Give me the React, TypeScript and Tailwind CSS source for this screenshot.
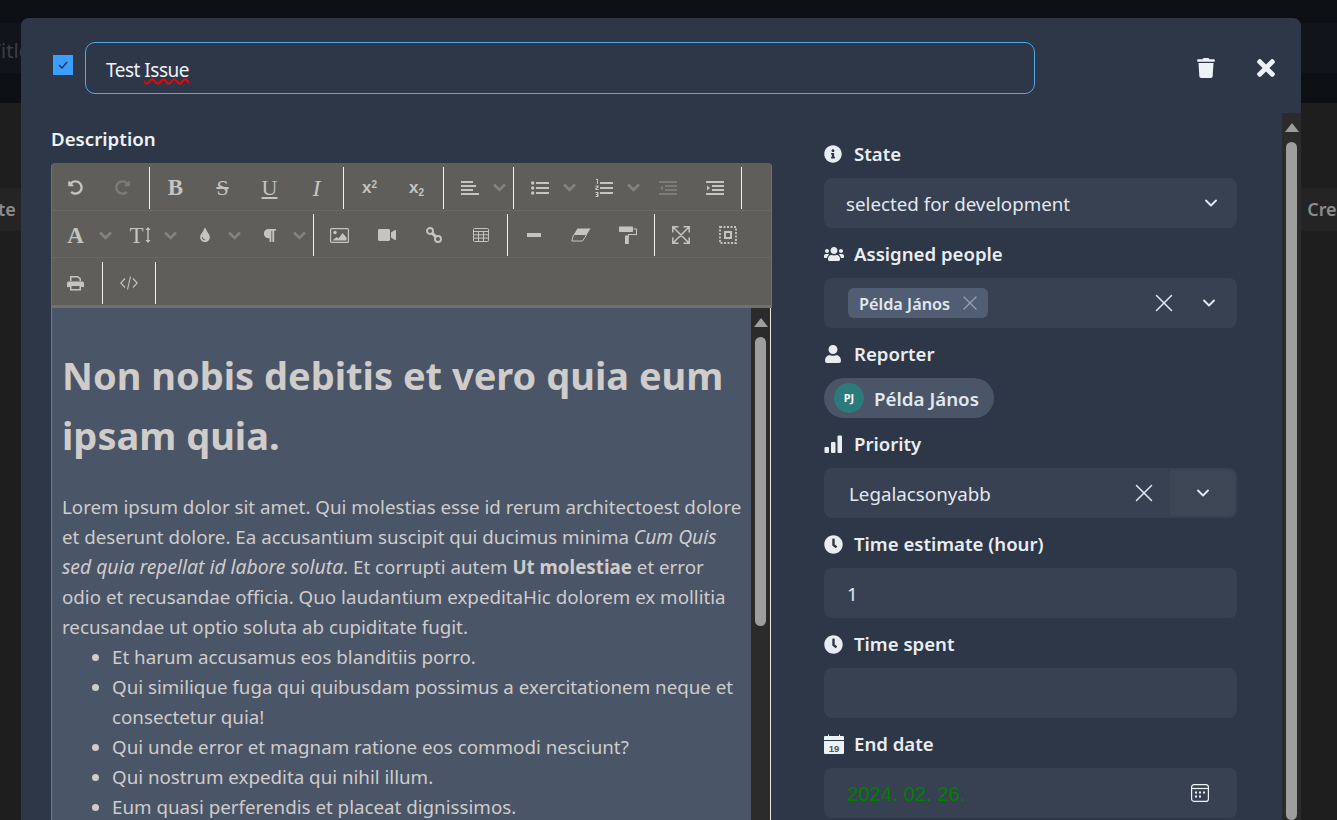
import React from 'react';
import {
  FaClock,
  FaInfoCircle,
  FaParagraph,
  FaRedoAlt,
  FaTimes,
  FaTint,
  FaTrash,
  FaUndoAlt,
  FaUser,
  FaUsers,
  FaVideo,
} from 'react-icons/fa';
import { ChevronDown, X } from 'lucide-react';

const Sep = () => <div className="mr-[2px] ml-[3px] h-[42px] w-px self-center bg-[#f1f1f1]" />;

const Btn: React.FC<{ children: React.ReactNode; dim?: boolean }> = ({ children, dim }) => (
  <div
    className={`flex h-[42px] w-[47px] items-center justify-center ${
      dim ? 'text-[#7c7c7a]' : 'text-[#c4c4c2]'
    }`}
  >
    {children}
  </div>
);

const Caret: React.FC<{ wide?: boolean }> = ({ wide }) => (
  <div className={`flex items-center ${wide ? 'w-[17.500px]' : 'w-[17px]'}`}>
    <svg width="13" height="9" viewBox="0 0 13 9" fill="none" stroke="#838381" strokeWidth="2.600">
      <path d="M1 1.500l5.500 5.500 5.500-5.500" />
    </svg>
  </div>
);

const Glyph: React.FC<{ className: string; children: React.ReactNode }> = ({
  className,
  children,
}) => <span className={`font-['Liberation_Serif',serif] leading-none ${className}`}>{children}</span>;

const Lines = ({ indent }: { indent: 'in' | 'out' }) => (
  <svg width="18" height="14" viewBox="0 0 18 14" fill="currentColor">
    <rect x="0" y="0" width="18" height="2" />
    <rect x="6" y="4" width="12" height="2" />
    <rect x="6" y="8" width="12" height="2" />
    <rect x="0" y="12" width="18" height="2" />
    {indent === 'in' ? <path d="M1 4.500 4 7 1 9.500z" /> : <path d="M4 4.500 1 7 4 9.500z" />}
  </svg>
);

const AlignIcon = () => (
  <svg width="18" height="14" viewBox="0 0 18 14" fill="currentColor">
    <rect x="0" y="0" width="12" height="2" />
    <rect x="0" y="4" width="15" height="2" />
    <rect x="0" y="8" width="12" height="2" />
    <rect x="0" y="12" width="18" height="2" />
  </svg>
);

const UlIcon = () => (
  <svg width="18" height="14" viewBox="0 0 18 14" fill="currentColor">
    <circle cx="1.700" cy="2" r="1.700" />
    <circle cx="1.700" cy="7" r="1.700" />
    <circle cx="1.700" cy="12" r="1.700" />
    <rect x="5" y="1" width="13" height="2" />
    <rect x="5" y="6" width="13" height="2" />
    <rect x="5" y="11" width="13" height="2" />
  </svg>
);

const OlIcon = () => (
  <svg width="18" height="18" viewBox="0 0 18 18" fill="currentColor">
    <rect x="5" y="3" width="13" height="2" />
    <rect x="5" y="8" width="13" height="2" />
    <rect x="5" y="13" width="13" height="2" />
    <path d="M1 0h2v5H2V1H1zM0.500 6.500h3v2.500H2v1h1.500v1h-3V8.500H2v-1H0.500zM0.500 13h3v5h-3v-1H2v-1H1v-1h1v-1H0.500z" />
  </svg>
);

const ImageIcon = () => (
  <svg width="19" height="15" viewBox="0 0 19 15" fill="currentColor">
    <rect x="0.600" y="0.600" width="17.800" height="13.800" rx="1" fill="none" stroke="currentColor" strokeWidth="1.200" />
    <circle cx="5" cy="4.500" r="1.700" />
    <path d="M2.500 12.500 6.500 9l2 1.500L12.500 5l4 4.500v3z" />
  </svg>
);

const LinkIcon = () => (
  <svg width="16" height="16" viewBox="0 0 16 16" fill="none" stroke="currentColor" strokeWidth="1.900">
    <circle cx="4" cy="4" r="3" />
    <circle cx="12" cy="12" r="3" />
    <path d="M6 6l4 4" strokeWidth="3" />
  </svg>
);

const TableIcon = () => (
  <svg width="16" height="14" viewBox="0 0 16 14" fill="none" stroke="currentColor" strokeWidth="1">
    <rect x="0.500" y="0.500" width="15" height="13" rx="1" />
    <path d="M0.500 3.500h15M0.500 6.800h15M0.500 10.100h15M5.500 3.500v10M10.500 3.500v10" />
  </svg>
);

const ClearIcon = () => (
  <svg width="20" height="14" viewBox="0 0 20 14" fill="currentColor">
    <path d="M6.500 0.500H19.500L15.500 7H2.500z" />
    <path d="M2.500 7 0.800 13h10.700l4-6" fill="none" stroke="currentColor" strokeWidth="1" />
  </svg>
);

const RollerIcon = () => (
  <svg width="18" height="18" viewBox="0 0 18 18" fill="currentColor">
    <rect x="0" y="0.500" width="14" height="5.500" rx="0.800" />
    <path d="M14.500 3H17.500v5.500H9.500V11" fill="none" stroke="currentColor" strokeWidth="1.100" />
    <rect x="6" y="9.500" width="3.800" height="8.500" />
  </svg>
);

const ExpandIcon = () => (
  <svg width="18" height="18" viewBox="0 0 18 18" fill="none" stroke="currentColor" strokeWidth="1.500">
    <path d="M0.800 6.500V0.800h5.700M11.500 0.800h5.700v5.700M17.200 11.500v5.700h-5.700M6.500 17.200H0.800v-5.700M1.500 1.500l15 15M16.500 1.500l-15 15" />
  </svg>
);

const SelectAllIcon = () => (
  <svg width="18" height="18" viewBox="0 0 18 18" fill="currentColor">
    <path d="M5 5h8v8H5zm2 2v4h4V7z" fillRule="evenodd" />
    <path d="M1 1h16v16H1z" fill="none" stroke="currentColor" strokeWidth="1.800" strokeDasharray="2 1.500" />
  </svg>
);

const PrintIcon = () => (
  <svg width="17" height="16" viewBox="0 0 17 16" fill="currentColor">
    <path d="M3 6V1h8l3 2.500V6h-1.500V4.200L10.500 2.500h-6V6z" />
    <path d="M1.500 6.500h14A1.500 1.500 0 0 1 17 8v4h-3v3.500H3V12H0V8a1.500 1.500 0 0 1 1.500-1.500zM4.500 11v3h8v-3z" fillRule="evenodd" />
  </svg>
);

const CodeIcon = () => (
  <svg width="18" height="14" viewBox="0 0 18 14" fill="none" stroke="currentColor" strokeWidth="1.100">
    <path d="M5 2.500.8 7 5 11.500M13 2.500 17.200 7 13 11.500M10.500 0.500 7.500 13.500" />
  </svg>
);

const TextSizeIcon = () => (
  <span className="flex items-center">
    <Glyph className="text-[23px]">T</Glyph>
    <svg width="6" height="16" viewBox="0 0 6 16" fill="currentColor" className="ml-px">
      <path d="M3 0 5.500 3H3.700v10h1.800L3 16 .5 13h1.800V3H.5z" />
    </svg>
  </span>
);

const Toolbar = () => (
  <div className="rounded-t-[3px] border-x border-b-[3px] border-[#70706e] bg-[#5f5e5b]">
    <div className="flex h-[48px] items-center border-b border-[#686765] pt-[2px]">
      <Btn>
        <FaUndoAlt size={15} />
      </Btn>
      <Btn dim>
        <FaRedoAlt size={15} />
      </Btn>
      <Sep />
      <Btn>
        <Glyph className="text-[23px] font-bold">B</Glyph>
      </Btn>
      <Btn>
        <Glyph className="text-[22px] line-through">S</Glyph>
      </Btn>
      <Btn>
        <Glyph className="text-[22px] underline underline-offset-2">U</Glyph>
      </Btn>
      <Btn>
        <Glyph className="text-[24px] italic">I</Glyph>
      </Btn>
      <Sep />
      <Btn>
        <span className="font-['Liberation_Sans',sans-serif] text-[17px] leading-none font-bold">
          x<sup className="text-[10px]">2</sup>
        </span>
      </Btn>
      <Btn>
        <span className="font-['Liberation_Sans',sans-serif] text-[17px] leading-none font-bold">
          x<sub className="text-[10px]">2</sub>
        </span>
      </Btn>
      <Sep />
      <Btn>
        <AlignIcon />
      </Btn>
      <Caret />
      <Sep />
      <Btn>
        <UlIcon />
      </Btn>
      <Caret />
      <Btn>
        <OlIcon />
      </Btn>
      <Caret />
      <Btn dim>
        <Lines indent="out" />
      </Btn>
      <Btn>
        <Lines indent="in" />
      </Btn>
      <Sep />
    </div>
    <div className="flex h-[47px] items-center border-b border-[#686765] pt-[2px]">
      <Btn>
        <Glyph className="text-[23px] font-bold">A</Glyph>
      </Btn>
      <Caret wide />
      <Btn>
        <TextSizeIcon />
      </Btn>
      <Caret wide />
      <Btn>
        <FaTint size={14} />
      </Btn>
      <Caret wide />
      <Btn>
        <FaParagraph size={15} />
      </Btn>
      <Caret wide />
      <Sep />
      <Btn>
        <ImageIcon />
      </Btn>
      <Btn>
        <FaVideo size={18} />
      </Btn>
      <Btn>
        <LinkIcon />
      </Btn>
      <Btn>
        <TableIcon />
      </Btn>
      <Sep />
      <Btn>
        <div className="h-[4px] w-[14px] bg-[#c4c4c2]" />
      </Btn>
      <Btn>
        <ClearIcon />
      </Btn>
      <Btn>
        <RollerIcon />
      </Btn>
      <Sep />
      <Btn>
        <ExpandIcon />
      </Btn>
      <Btn>
        <SelectAllIcon />
      </Btn>
    </div>
    <div className="flex h-[47px] items-center pt-[2px]">
      <Btn>
        <PrintIcon />
      </Btn>
      <Sep />
      <Btn>
        <CodeIcon />
      </Btn>
      <Sep />
    </div>
  </div>
);

const Scrollbar: React.FC<{ className: string; thumb: string }> = ({ className, thumb }) => (
  <div className={`flex shrink-0 flex-col items-center bg-[#2b2b2b] ${className}`}>
    <div className="mt-[10px] h-0 w-0 border-x-[7px] border-b-[9px] border-x-transparent border-b-[#9e9e9e]" />
    <div className={`mt-[10px] w-[11px] rounded-full bg-[#9e9e9e] ${thumb}`} />
  </div>
);

const Editor = () => (
  <div className="w-[721px] overflow-hidden rounded-t-[4px]">
    <Toolbar />
    <div className="mr-px flex h-[600px] border-r border-l border-r-[#e8e8e8] border-l-[#75797f] bg-[#4a5568]">
      <div className="min-w-0 flex-1 pr-[7px] pl-[10px] text-[18.750px] leading-[30px] text-[#cfccca]">
        <h1 className="mt-[37px] mb-[27px] text-[38px] leading-[60px] font-bold">
          Non nobis debitis et vero quia eum ipsam quia.
        </h1>
        <p>
          Lorem ipsum dolor sit amet. Qui molestias esse id rerum architectoest dolore et deserunt
          dolore. Ea accusantium suscipit qui ducimus minima{' '}
          <em className="text-[19.300px]">Cum Quis sed quia repellat id labore soluta</em>. Et
          corrupti autem <strong>Ut molestiae</strong> et error odio et recusandae officia. Quo
          laudantium expeditaHic dolorem ex mollitia recusandae ut optio soluta ab cupiditate fugit.
        </p>
        <ul className="list-disc pl-[50px]">
          <li>Et harum accusamus eos blanditiis porro.</li>
          <li>Qui similique fuga qui quibusdam possimus a exercitationem neque et consectetur quia!</li>
          <li>Qui unde error et magnam ratione eos commodi nesciunt?</li>
          <li>Qui nostrum expedita qui nihil illum.</li>
          <li>Eum quasi perferendis et placeat dignissimos.</li>
        </ul>
      </div>
      <Scrollbar className="w-[19px]" thumb="h-[289px]" />
    </div>
  </div>
);

const SignalIcon = () => (
  <svg width="18" height="18" viewBox="0 0 18 18" fill="currentColor">
    <rect x="0.500" y="12" width="4.500" height="6" rx="1" />
    <rect x="7" y="7" width="4.500" height="11" rx="1" />
    <rect x="13.500" y="0.500" width="4.500" height="17.500" rx="1" />
  </svg>
);

const CalendarIcon = () => (
  <svg width="20" height="20" viewBox="0 0 20 20">
    <path
      d="M1 2h3V0.500h1V2h10V0.500h1V2h3a1 1 0 0 1 1 1v3H0V3a1 1 0 0 1 1-1zM0 7h20v12a1 1 0 0 1-1 1H1a1 1 0 0 1-1-1z"
      fill="#edf2f7"
    />
    <text x="10" y="17.500" textAnchor="middle" fontSize="9.500" fill="#4a5568" fontFamily="Liberation Sans, sans-serif">
      19
    </text>
  </svg>
);

const Label: React.FC<{ icon: React.ReactNode; children: React.ReactNode }> = ({
  icon,
  children,
}) => (
  <div className="flex h-[50px] items-center pt-[2px] text-[18.600px] font-semibold text-[#e9edf2]">
    <span className="flex w-[30px] items-center">{icon}</span>
    {children}
  </div>
);

const Field: React.FC<{ children?: React.ReactNode; className?: string }> = ({
  children,
  className = '',
}) => (
  <div
    className={`flex h-[50px] items-center rounded-[8px] bg-[#374151] text-[18.750px] text-[#e2e8f0] ${className}`}
  >
    {children}
  </div>
);

const SidePanel = () => (
  <div className="w-[413px]">
    <Label icon={<FaInfoCircle size={18} />}>State</Label>
    <Field className="justify-between pr-[16px] pl-[22px]">
      <span className="pt-[2px]">selected for development</span>
      <ChevronDown size={20} strokeWidth={2.300} />
    </Field>
    <Label icon={<FaUsers size={20} />}>Assigned people</Label>
    <Field className="pl-[24px]">
      <div className="flex h-[30px] items-center gap-[12px] rounded-[6px] bg-[#515d72] pr-[10px] pl-[11px] text-[16.300px] font-semibold text-[#e2e8f0]">
        <span className="pt-[2px]">Példa János</span>
        <X strokeWidth={1.300} className="-mx-[4px] h-[24px] w-[24px] text-[#94a0b2]" />
      </div>
      <X size={30} strokeWidth={1.200} className="mr-[20px] ml-auto" />
      <ChevronDown size={20} strokeWidth={2.300} className="mr-[18px]" />
    </Field>
    <Label icon={<FaUser size={18} />}>Reporter</Label>
    <div className="flex h-[40px] w-[170px] items-center rounded-full bg-[#4a5568] pl-[10px] text-[18.750px] font-semibold text-[#e2e8f0]">
      <span className="mr-[10px] flex h-[30px] w-[30px] items-center justify-center rounded-full bg-[#2c7a7b] text-[11px] font-bold text-white">
        PJ
      </span>
      <span className="pt-[2px]">Példa János</span>
    </div>
    <Label icon={<SignalIcon />}>Priority</Label>
    <Field className="pl-[25px]">
      <span className="pt-[2px]">Legalacsonyabb</span>
      <X size={30} strokeWidth={1.200} className="mr-[11px] ml-auto" />
      <div className="mr-[2px] flex h-[46px] w-[65px] items-center justify-center rounded-r-[6px] bg-[#3d4655]">
        <ChevronDown size={20} strokeWidth={2.300} />
      </div>
    </Field>
    <Label icon={<FaClock size={19} />}>Time estimate (hour)</Label>
    <Field className="pl-[23px]">
      <span className="pt-[3px]">1</span>
    </Field>
    <Label icon={<FaClock size={19} />}>Time spent</Label>
    <Field />
    <Label icon={<CalendarIcon />}>End date</Label>
    <Field className="justify-between pr-[28px] pl-[23px] font-['Liberation_Sans',sans-serif]">
      <span className="pt-[2px] text-[20.300px] text-[#008000]">2024. 02. 26.</span>
      <svg width="18" height="18" viewBox="0 0 18 18" fill="none" className="text-[#edf2f7]">
        <rect x="0.600" y="0.600" width="16.800" height="16.800" rx="2.500" stroke="currentColor" strokeWidth="1.200" />
        <path d="M1 4.500h16" stroke="currentColor" strokeWidth="1.200" />
        <path
          d="M4 7.500h2v2H4zM8 7.500h2v2H8zM12 7.500h2v2h-2zM4 11.500h2v2H4zM8 11.500h2v2H8z"
          fill="currentColor"
        />
      </svg>
    </Field>
  </div>
);

const Modal = () => (
  <div className="absolute top-[18px] left-[21px] flex h-[802px] w-[1280px] flex-col overflow-hidden rounded-t-[8px] bg-[#2d3748] text-[#edf2f7]">
    <div className="flex h-[95px] shrink-0 items-start pt-[24px]">
      <div className="mt-[13px] ml-[32px] flex h-[20px] w-[20px] items-center justify-center bg-[#3b9eff]">
        <svg width="10" height="8" viewBox="0 0 10 8" fill="none" stroke="#1f3a5c" strokeWidth="1.500">
          <path d="M1 4l3 3 5-6" />
        </svg>
      </div>
      <div className="ml-[12px] flex h-[52px] w-[950px] items-center rounded-[10px] border-[1.500px] border-[#4fa8e8] pt-[4px] pl-[20px] text-[19px] tracking-[-0.500px] text-[#edf2f7]">
        Test&nbsp;
        <span className="underline decoration-[#ff0000] decoration-wavy decoration-[1.500px] underline-offset-[1px]">
          Issue
        </span>
      </div>
      <FaTrash size={20} className="mt-[16px] ml-[161px] text-[#edf2f7]" />
      <FaTimes size={26} className="mt-[13px] ml-[37px] text-[#edf2f7]" />
    </div>
    <div className="flex min-h-0 flex-1">
      <div className="w-[30px] shrink-0" />
      <div className="w-[721px] shrink-0">
        <div className="flex h-[50px] items-center pt-[2px] text-[18.700px] font-semibold text-[#edf2f7]">
          Description
        </div>
        <Editor />
      </div>
      <div className="ml-[52px] pt-[15px]">
        <SidePanel />
      </div>
      <div className="flex-1" />
      <Scrollbar className="w-[19px]" thumb="h-[700px]" />
    </div>
  </div>
);

const App = () => (
  <div className="relative h-[820px] w-[1337px] overflow-hidden bg-[#1e1e1e] font-['Noto_Sans','Open_Sans',sans-serif]">
    <div className="h-[103px] bg-[#0c0f14] pt-[23px]">
      <div className="flex h-[50px] items-center bg-[#11141a] pt-[5px] text-[20px] text-[#3a3f46]">
        <span className="-ml-[10px]">Title</span>
      </div>
    </div>
    <div className="mt-[85px] flex h-[43px] items-center justify-between bg-[#242424] text-[18px] font-semibold text-[#8c8c8c]">
      <span className="-ml-[42px]">Create</span>
      <span className="-mr-[28px]">Create</span>
    </div>
    <Modal />
  </div>
);

export default App;
